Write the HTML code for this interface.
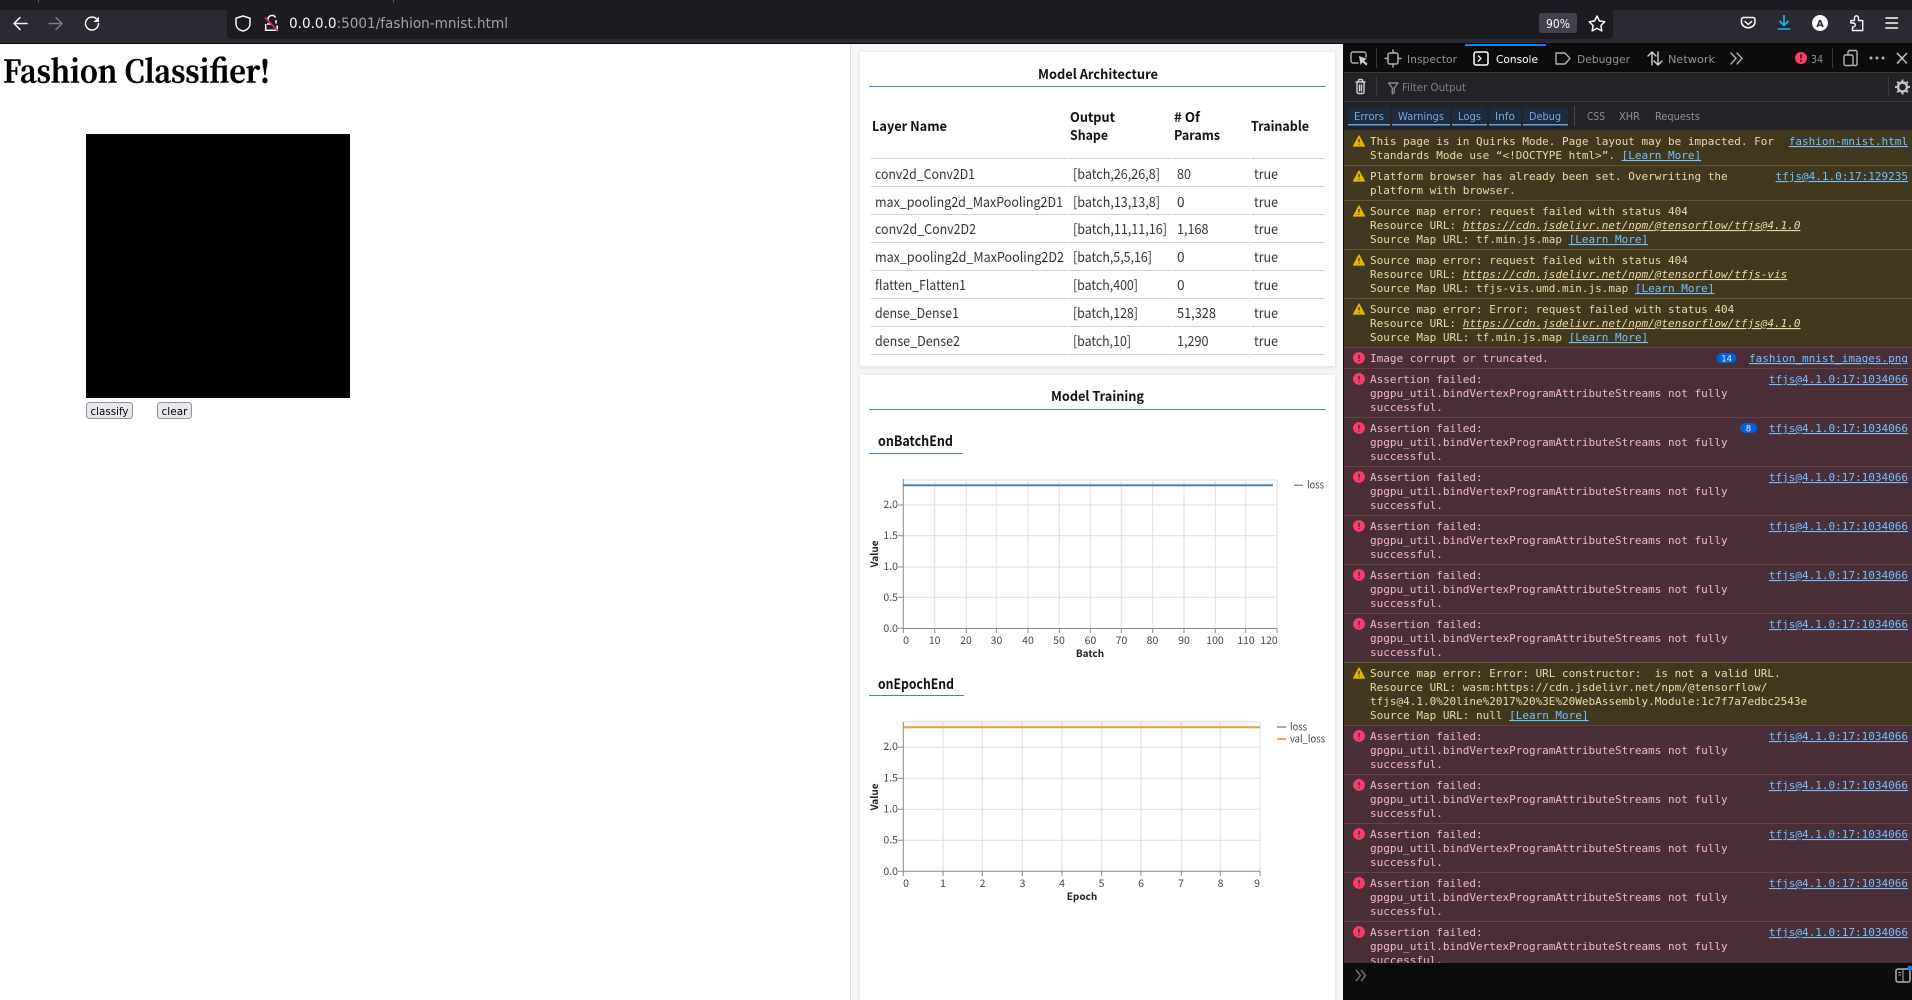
<!DOCTYPE html>
<html><head><meta charset="utf-8"><title>Fashion Classifier</title>
<style>
html,body{margin:0;padding:0;background:#fff;width:1912px;height:1000px;overflow:hidden}
svg{display:block}
text{white-space:pre}
.ns{font-family:"Noto Sans CJK JP","Liberation Sans",sans-serif}
.b{font-weight:700;fill:#111}
.td{font-size:13.6px;fill:#333}
.th{font-size:13.5px}
.tick{font-family:"Noto Sans CJK JP","Liberation Sans",sans-serif;font-size:10.5px;fill:#444}
.ax{font-family:"Noto Sans CJK JP","Liberation Sans",sans-serif;font-size:10px;font-weight:700;fill:#222}
.ui{font-family:"DejaVu Sans",sans-serif}
.dt{font-family:"DejaVu Sans",sans-serif;font-size:11px;fill:#939395}
.m{font-family:"DejaVu Sans Mono",monospace;font-size:11px}
.w{fill:#e9d9a6}
.e{fill:#f0b6c8}
.l{fill:#75bfff;text-decoration:underline}
.i{font-style:italic;text-decoration:underline}
.src{text-anchor:end}
.g{stroke:#e3e3e3;stroke-width:1.2;fill:none}
.a{stroke:#888;stroke-width:1;fill:none}
.ic{fill:none;stroke:#fbfbfe;stroke-width:1.5;stroke-linecap:round;stroke-linejoin:round}
.dc{fill:none;stroke:#b1b1b3;stroke-width:1.4;stroke-linecap:round;stroke-linejoin:round}
</style></head><body>
<svg width="1912" height="1000" viewBox="0 0 1912 1000" xmlns="http://www.w3.org/2000/svg">
<defs>
<filter id="sh" x="-3%" y="-3%" width="106%" height="106%"><feDropShadow dx="0" dy="1" stdDeviation="2" flood-color="#000" flood-opacity=".12"/></filter>
<symbol id="wi" viewBox="0 0 14 14" overflow="visible"><path d="M7 .8L13.6 13H.4Z" fill="#e5b800" stroke="#e5b800" stroke-linejoin="round"/><path d="M7 4.600V8.800M7 10.200V11.400" stroke="#3a3218" stroke-width="1.500"/></symbol>
<symbol id="ei" viewBox="0 0 14 14" overflow="visible"><circle cx="7" cy="7" r="6.900" fill="#ff3b6b"/><path d="M7 3.200V8M7 9.600V10.900" stroke="#4b2f36" stroke-width="1.800"/></symbol>
</defs>

<!-- browser chrome -->
<rect x="0" y="0" width="1912" height="10" fill="#1c1b22"/>
<rect x="38" y="0" width="1" height="3" fill="#55545c"/><rect x="393" y="0" width="1" height="3" fill="#55545c"/>
<rect x="0" y="10" width="1912" height="33" fill="#2b2a33"/>
<rect x="0" y="43" width="1912" height="1" fill="#0c0c0d"/>
<path class="ic" d="M27 23.500H14M20 17.500l-6 6 6 6"/>
<path class="ic" stroke-opacity=".4" d="M49 23.500H62M56 17.500l6 6-6 6"/>
<path class="ic" d="M98.500 23.500a6.500 6.500 0 1 1-2.500-5.100"/><path d="M99 16.500v5.500h-5.500z" fill="#fbfbfe"/>
<rect x="227" y="7" width="1386" height="32" rx="4" fill="#1c1b22"/>
<path class="ic" d="M243 16l7 2.200v5.300c0 3.800-2.800 6.500-7 7.500-4.200-1-7-3.700-7-7.500v-5.300z"/>
<path d="M268 21v-2a4 4 0 0 1 7.500-1.500M276 20v3.500M265.700 24v6.300h11.500V25.500" fill="none" stroke="#fbfbfe" stroke-width="1.500"/>
<path d="M267 24h5" stroke="#fbfbfe" stroke-width="1.500"/>
<path d="M265 17.500L278 31" stroke="#e22850" stroke-width="1.700"/>
<text class="ui" x="289" y="28" font-size="14" textLength="219" lengthAdjust="spacingAndGlyphs" fill="#a2a2a8"><tspan fill="#fbfbfe">0.0.0.0</tspan>:5001/fashion-mnist.html</text>
<rect x="1539" y="13" width="38" height="20" rx="3" fill="#42414d"/>
<text class="ui" x="1546" y="28" font-size="12" textLength="24" lengthAdjust="spacingAndGlyphs" fill="#fbfbfe">90%</text>
<path class="ic" d="M1597 16l2.400 4.900 5.400.8-3.900 3.800.9 5.400-4.800-2.600-4.800 2.600.9-5.400-3.900-3.800 5.400-.8z"/>
<path class="ic" d="M1743.500 17.500h9.500a2 2 0 0 1 2 2v3a6.800 6 0 0 1-13.500 0v-3a2 2 0 0 1 2-2zM1745 21.500l3.300 3 3.300-3"/>
<path fill="none" stroke="#1cb8f0" stroke-width="1.600" d="M1784 15v10.500M1779.500 21l4.500 4.500 4.500-4.500M1777.500 29h13"/>
<circle cx="1820" cy="23" r="8" fill="#fbfbfe"/>
<text class="ui" x="1820" y="27" font-size="9.500" font-weight="700" text-anchor="middle" fill="#2b2a33">A</text>
<path d="M1855 16.500a2 2 0 0 1 3.500 1.500v2.500h4.200v10H1852.500v-3.500h.8a2 2 0 0 0 0-4h-2.500v-2.500H1854.500V18a2 2 0 0 1 .5-1.500z" fill="none" stroke="#fbfbfe" stroke-width="1.400" stroke-linejoin="round"/>
<path class="ic" stroke-linecap="butt" d="M1886 18h11.500M1886 23h11.500M1886 28h11.500"/>

<!-- page left -->
<rect x="0" y="44" width="851" height="956" fill="#fff"/>
<text x="3" y="82.500" font-family="'Noto Serif CJK SC','Liberation Serif',serif" font-weight="700" font-size="31" textLength="267" lengthAdjust="spacingAndGlyphs" fill="#000" stroke="#000" stroke-width=".5">Fashion Classifier!</text>
<rect x="86" y="134" width="264" height="264" fill="#000"/>
<rect x="86.500" y="402.500" width="46" height="16" rx="3" fill="#e9e9ed" stroke="#8f8f9d"/>
<text class="ui" x="90.500" y="415" font-size="11" textLength="38" lengthAdjust="spacingAndGlyphs" fill="#000">classify</text>
<rect x="157.500" y="402.500" width="34" height="16" rx="3" fill="#e9e9ed" stroke="#8f8f9d"/>
<text class="ui" x="161.500" y="415" font-size="11" textLength="26" lengthAdjust="spacingAndGlyphs" fill="#000">clear</text>

<!-- panel -->
<rect x="850" y="44" width="494" height="956" fill="#f6f6f6"/>
<rect x="850" y="44" width="1" height="956" fill="#dcdcdc"/>
<rect x="860" y="52" width="475" height="314" fill="#fff" filter="url(#sh)"/>
<rect x="860" y="375" width="475" height="640" fill="#fff" filter="url(#sh)"/>

<text class="ns b th" x="1038" y="79" textLength="120" lengthAdjust="spacingAndGlyphs">Model Architecture</text>
<rect x="869" y="86" width="457" height="1" fill="#3f80d8"/>
<g class="ns b th">
<text class="ns b th" x="872" y="131" textLength="75" lengthAdjust="spacingAndGlyphs">Layer Name</text>
<text class="ns b th" x="1070" y="122" textLength="45" lengthAdjust="spacingAndGlyphs">Output</text>
<text class="ns b th" x="1070" y="140" textLength="38" lengthAdjust="spacingAndGlyphs">Shape</text>
<text class="ns b th" x="1174" y="122" textLength="26" lengthAdjust="spacingAndGlyphs"># Of</text>
<text class="ns b th" x="1174" y="140" textLength="46" lengthAdjust="spacingAndGlyphs">Params</text>
<text class="ns b th" x="1251" y="131" textLength="58" lengthAdjust="spacingAndGlyphs">Trainable</text>
</g>
<g fill="#d0d0d0">
<rect x="871" y="158" width="197" height="1"/><rect x="1069" y="158" width="102" height="1"/><rect x="1173" y="158" width="76" height="1"/><rect x="1251" y="158" width="73" height="1"/>
<rect x="871" y="186" width="197" height="1"/><rect x="1069" y="186" width="102" height="1"/><rect x="1173" y="186" width="76" height="1"/><rect x="1251" y="186" width="73" height="1"/>
<rect x="871" y="214" width="197" height="1"/><rect x="1069" y="214" width="102" height="1"/><rect x="1173" y="214" width="76" height="1"/><rect x="1251" y="214" width="73" height="1"/>
<rect x="871" y="242" width="197" height="1"/><rect x="1069" y="242" width="102" height="1"/><rect x="1173" y="242" width="76" height="1"/><rect x="1251" y="242" width="73" height="1"/>
<rect x="871" y="270" width="197" height="1"/><rect x="1069" y="270" width="102" height="1"/><rect x="1173" y="270" width="76" height="1"/><rect x="1251" y="270" width="73" height="1"/>
<rect x="871" y="298" width="197" height="1"/><rect x="1069" y="298" width="102" height="1"/><rect x="1173" y="298" width="76" height="1"/><rect x="1251" y="298" width="73" height="1"/>
<rect x="871" y="326" width="197" height="1"/><rect x="1069" y="326" width="102" height="1"/><rect x="1173" y="326" width="76" height="1"/><rect x="1251" y="326" width="73" height="1"/>
<rect x="871" y="354" width="197" height="1"/><rect x="1069" y="354" width="102" height="1"/><rect x="1173" y="354" width="76" height="1"/><rect x="1251" y="354" width="73" height="1"/>
</g>
<text class="ns td" x="875" y="179" textLength="100" lengthAdjust="spacingAndGlyphs">conv2d_Conv2D1</text>
<text class="ns td" x="1073" y="179" textLength="87" lengthAdjust="spacingAndGlyphs">[batch,26,26,8]</text>
<text class="ns td" x="1177" y="179" textLength="14" lengthAdjust="spacingAndGlyphs">80</text>
<text class="ns td" x="1254" y="179" textLength="24" lengthAdjust="spacingAndGlyphs">true</text>
<text class="ns td" x="875" y="207" textLength="188" lengthAdjust="spacingAndGlyphs">max_pooling2d_MaxPooling2D1</text>
<text class="ns td" x="1073" y="207" textLength="87" lengthAdjust="spacingAndGlyphs">[batch,13,13,8]</text>
<text class="ns td" x="1177" y="207">0</text>
<text class="ns td" x="1254" y="207" textLength="24" lengthAdjust="spacingAndGlyphs">true</text>
<text class="ns td" x="875" y="234" textLength="101" lengthAdjust="spacingAndGlyphs">conv2d_Conv2D2</text>
<text class="ns td" x="1073" y="234" textLength="94" lengthAdjust="spacingAndGlyphs">[batch,11,11,16]</text>
<text class="ns td" x="1177" y="234" textLength="31.500" lengthAdjust="spacingAndGlyphs">1,168</text>
<text class="ns td" x="1254" y="234" textLength="24" lengthAdjust="spacingAndGlyphs">true</text>
<text class="ns td" x="875" y="262" textLength="189" lengthAdjust="spacingAndGlyphs">max_pooling2d_MaxPooling2D2</text>
<text class="ns td" x="1073" y="262" textLength="79" lengthAdjust="spacingAndGlyphs">[batch,5,5,16]</text>
<text class="ns td" x="1177" y="262">0</text>
<text class="ns td" x="1254" y="262" textLength="24" lengthAdjust="spacingAndGlyphs">true</text>
<text class="ns td" x="875" y="290" textLength="91" lengthAdjust="spacingAndGlyphs">flatten_Flatten1</text>
<text class="ns td" x="1073" y="290" textLength="65" lengthAdjust="spacingAndGlyphs">[batch,400]</text>
<text class="ns td" x="1177" y="290">0</text>
<text class="ns td" x="1254" y="290" textLength="24" lengthAdjust="spacingAndGlyphs">true</text>
<text class="ns td" x="875" y="318" textLength="84" lengthAdjust="spacingAndGlyphs">dense_Dense1</text>
<text class="ns td" x="1073" y="318" textLength="65" lengthAdjust="spacingAndGlyphs">[batch,128]</text>
<text class="ns td" x="1177" y="318" textLength="39" lengthAdjust="spacingAndGlyphs">51,328</text>
<text class="ns td" x="1254" y="318" textLength="24" lengthAdjust="spacingAndGlyphs">true</text>
<text class="ns td" x="875" y="346" textLength="85" lengthAdjust="spacingAndGlyphs">dense_Dense2</text>
<text class="ns td" x="1073" y="346" textLength="58" lengthAdjust="spacingAndGlyphs">[batch,10]</text>
<text class="ns td" x="1177" y="346" textLength="31.500" lengthAdjust="spacingAndGlyphs">1,290</text>
<text class="ns td" x="1254" y="346" textLength="24" lengthAdjust="spacingAndGlyphs">true</text>

<text class="ns b th" x="1051" y="401" textLength="93" lengthAdjust="spacingAndGlyphs">Model Training</text>
<rect x="869" y="409" width="457" height="1" fill="#3f80d8"/>
<text class="ns b" x="878" y="446" font-size="14" textLength="75" lengthAdjust="spacingAndGlyphs">onBatchEnd</text>
<rect x="869" y="453" width="94" height="1" fill="#3f80d8"/>

<!-- chart 1 -->
<path class="g" d="M934.700 480V628M966.300 480V628M996.300 480V628M1028 480V628M1059.300 480V628M1090.300 480V628M1121.300 480V628M1152.700 480V628M1184 480V628M1215.300 480V628M1245.700 480V628M1277 480V628M903 480H1277M903 505H1277M903 535.700H1277M903 567H1277M903 597.300H1277"/>
<path class="a" d="M903.300 479V628.500H1277M903.300 628V633M934.700 628V633M966.300 628V633M996.300 628V633M1028 628V633M1059.300 628V633M1090.300 628V633M1121.300 628V633M1152.700 628V633M1184 628V633M1215.300 628V633M1245.700 628V633M1277 628V633M898 505H903M898 535.700H903M898 567H903M898 597.300H903M898 628.300H903"/>
<path d="M903 485.200H1273" stroke="#4c78a8" stroke-width="1.500" fill="none"/>
<path d="M903 485.200H1273" stroke="#4c78a8" stroke-opacity=".25" stroke-width="3.500" fill="none"/>
<g class="tick" text-anchor="end">
<text x="898" y="508">2.0</text><text x="898" y="539">1.5</text><text x="898" y="570">1.0</text><text x="898" y="601">0.5</text><text x="898" y="632">0.0</text>
</g>
<g class="tick" text-anchor="middle">
<text x="906" y="644">0</text><text x="934.700" y="644">10</text><text x="966" y="644">20</text><text x="996.500" y="644">30</text><text x="1028" y="644">40</text><text x="1059" y="644">50</text><text x="1090.500" y="644">60</text><text x="1121.500" y="644">70</text><text x="1152.500" y="644">80</text><text x="1184" y="644">90</text><text x="1215" y="644">100</text><text x="1246" y="644">110</text><text x="1269" y="644">120</text>
</g>
<text class="ax" x="1090" y="657" text-anchor="middle">Batch</text>
<text class="ax" transform="translate(878 554) rotate(-90)" text-anchor="middle">Value</text>
<path d="M1294 485.300H1303" stroke="#4c78a8" stroke-width="1.500" stroke-opacity=".8"/>
<text class="tick" x="1307" y="488.500" textLength="17" lengthAdjust="spacingAndGlyphs">loss</text>

<text class="ns b" x="878" y="689" font-size="14" textLength="76" lengthAdjust="spacingAndGlyphs">onEpochEnd</text>
<rect x="869" y="695" width="95" height="1" fill="#3f80d8"/>

<!-- chart 2 -->
<path class="g" d="M943 722V871M982.300 722V871M1022.300 722V871M1062 722V871M1101.700 722V871M1141 722V871M1181.300 722V871M1220.300 722V871M1260 722V871M903 722H1260M903 747.300H1260M903 778.300H1260M903 809.300H1260M903 840.300H1260"/>
<path class="a" d="M903.300 722V871.300H1260M903.300 871V876M943 871V876M982.300 871V876M1022.300 871V876M1062 871V876M1101.700 871V876M1141 871V876M1181.300 871V876M1220.300 871V876M1260 871V876M898 747.300H903M898 778.300H903M898 809.300H903M898 840.300H903M898 871.300H903"/>
<path d="M903 727.300H1260" stroke="#f58518" stroke-width="2" stroke-opacity=".85" fill="none"/>
<g class="tick" text-anchor="end">
<text x="898" y="750">2.0</text><text x="898" y="781.500">1.5</text><text x="898" y="812.500">1.0</text><text x="898" y="843.500">0.5</text><text x="898" y="875">0.0</text>
</g>
<g class="tick" text-anchor="middle">
<text x="906" y="887">0</text><text x="943" y="887">1</text><text x="982.500" y="887">2</text><text x="1022.500" y="887">3</text><text x="1062" y="887">4</text><text x="1101.500" y="887">5</text><text x="1141" y="887">6</text><text x="1181" y="887">7</text><text x="1220.500" y="887">8</text><text x="1257" y="887">9</text>
</g>
<text class="ax" x="1082" y="900" text-anchor="middle">Epoch</text>
<text class="ax" transform="translate(878 797) rotate(-90)" text-anchor="middle">Value</text>
<path d="M1277 727H1286" stroke="#4c78a8" stroke-width="1.500" stroke-opacity=".8"/>
<path d="M1277 739H1286" stroke="#f58518" stroke-width="1.800" stroke-opacity=".85"/>
<text class="tick" x="1290" y="730.500" textLength="17" lengthAdjust="spacingAndGlyphs">loss</text>
<text class="tick" x="1290" y="742.500" textLength="35" lengthAdjust="spacingAndGlyphs">val_loss</text>

<!-- devtools toolbar -->
<rect x="1344" y="44" width="568" height="29" fill="#0c0c0d"/>
<rect x="1344" y="73" width="568" height="57" fill="#232327"/>
<rect x="1343" y="44" width="1" height="956" fill="#0c0c0d"/>
<rect x="1344" y="72" width="568" height="1" fill="#38383d"/>
<rect x="1344" y="101" width="568" height="1" fill="#38383d"/>
<rect x="1465" y="44" width="81" height="2" fill="#0a84ff"/>

<path class="dc" stroke="#d0d0d2" d="M1358 63h-5a2 2 0 0 1-2-2v-7a2 2 0 0 1 2-2h11a2 2 0 0 1 2 2v3"/>
<path d="M1359 56l1.500 9 2-3 3.500 3.500 1.500-1.500-3.500-3.500 3-1.500z" fill="#d0d0d2"/>
<rect x="1376" y="48" width="1" height="20" fill="#38383d"/>
<rect x="1388" y="53" width="10" height="11" rx="2" fill="none" stroke="#b1b1b3" stroke-width="1.500"/>
<path class="dc" d="M1393 50v3M1393 64v3M1385 58.500h3M1398 58.500h3"/>
<text class="dt" x="1407" y="63" textLength="50" lengthAdjust="spacingAndGlyphs">Inspector</text>
<rect x="1474" y="52" width="14" height="13" rx="2" fill="none" stroke="#fff" stroke-width="1.500"/>
<path d="M1478 55.500l3 3-3 3" fill="none" stroke="#fff" stroke-width="1.300"/>
<text class="dt" style="fill:#fff" x="1496" y="63" textLength="42" lengthAdjust="spacingAndGlyphs">Console</text>
<path class="dc" d="M1556 53h9l5 5.500-5 5.500h-9z"/>
<text class="dt" x="1577" y="63" textLength="53" lengthAdjust="spacingAndGlyphs">Debugger</text>
<path class="dc" stroke="#d0d0d2" style="stroke:#d0d0d2" d="M1652 65V52M1648 56l4-4 4 4M1658 52V65M1654 61l4 4 4-4"/>
<text class="dt" x="1668" y="63" textLength="47" lengthAdjust="spacingAndGlyphs">Network</text>
<path class="dc" stroke-width="1.800" d="M1731 53l5 5.500-5 5.500M1737 53l5 5.500-5 5.500"/>
<circle cx="1801" cy="58" r="6" fill="#ff3b6b"/><path d="M1801 54.500v4M1801 60v1.500" stroke="#0c0c0d" stroke-width="1.500"/>
<text class="dt" x="1811" y="63" textLength="12" lengthAdjust="spacingAndGlyphs">34</text>
<rect x="1832" y="48" width="1" height="20" fill="#38383d"/>
<path class="dc" d="M1848 55v-3a1.500 1.500 0 0 1 1.500-1.500h6a1.500 1.500 0 0 1 1.500 1.500v12a1.500 1.500 0 0 1-1.500 1.500h-2"/>
<rect x="1844" y="55" width="9" height="10.500" rx="1.500" fill="none" stroke="#b1b1b3" stroke-width="1.400"/>
<circle cx="1871" cy="58" r="1.500" fill="#b1b1b3"/><circle cx="1877" cy="58" r="1.500" fill="#b1b1b3"/><circle cx="1883" cy="58" r="1.500" fill="#b1b1b3"/>
<path d="M1897 53l10 10.500M1907 53l-10 10.500" stroke="#c5c5c7" stroke-width="1.500" fill="none"/>

<path class="dc" style="stroke:#d0d0d2" d="M1356 82h9M1358.500 82v-1.500a1 1 0 0 1 1-1h2a1 1 0 0 1 1 1v1.500M1357 82v10a1.500 1.500 0 0 0 1.500 1.500h4a1.500 1.500 0 0 0 1.500-1.500V82M1359.500 85v6M1361.500 85v6"/>
<rect x="1376" y="77" width="1" height="20" fill="#38383d"/>
<path class="dc" style="stroke:#8a8a8e" d="M1388.500 83h9.500l-3.700 5v4.500l-2 1.500v-6z"/>
<text class="dt" style="fill:#808084" x="1402" y="91" textLength="64" lengthAdjust="spacingAndGlyphs">Filter Output</text>
<rect x="1888" y="77" width="1" height="20" fill="#38383d"/>
<circle cx="1902.500" cy="87" r="4.500" fill="none" stroke="#c5c5c7" stroke-width="2.400"/>
<path d="M1902.500 79.500v2.500M1902.500 92v2.500M1895 87h2.500M1907.500 87h2.500M1897.200 81.700l1.800 1.800M1906 90.500l1.800 1.800M1907.800 81.700l-1.800 1.800M1899 90.500l-1.800 1.800" stroke="#c5c5c7" stroke-width="2"/>

<g fill="#1d2b3d">
<rect x="1348" y="107" width="42" height="18" rx="2"/><rect x="1392" y="107" width="58" height="18" rx="2"/><rect x="1452" y="107" width="35" height="18" rx="2"/><rect x="1489" y="107" width="32" height="18" rx="2"/><rect x="1523" y="107" width="45" height="18" rx="2"/>
</g>
<g fill="#58a6e8">
<rect x="1348" y="124" width="42" height="1.500"/><rect x="1392" y="124" width="58" height="1.500"/><rect x="1452" y="124" width="35" height="1.500"/><rect x="1489" y="124" width="32" height="1.500"/><rect x="1523" y="124" width="45" height="1.500"/>
</g>
<g class="dt" style="fill:#75a9dc">
<text class="dt" style="fill:#75a9dc" x="1354" y="120" textLength="30" lengthAdjust="spacingAndGlyphs">Errors</text>
<text class="dt" style="fill:#75a9dc" x="1398" y="120" textLength="46" lengthAdjust="spacingAndGlyphs">Warnings</text>
<text class="dt" style="fill:#75a9dc" x="1458" y="120" textLength="23" lengthAdjust="spacingAndGlyphs">Logs</text>
<text class="dt" style="fill:#75a9dc" x="1495" y="120" textLength="20" lengthAdjust="spacingAndGlyphs">Info</text>
<text class="dt" style="fill:#75a9dc" x="1529" y="120" textLength="32" lengthAdjust="spacingAndGlyphs">Debug</text>
</g>
<rect x="1574" y="106" width="1" height="20" fill="#4a4a4f"/>
<text class="dt" x="1587" y="120" textLength="18" lengthAdjust="spacingAndGlyphs">CSS</text>
<text class="dt" x="1619" y="120" textLength="21" lengthAdjust="spacingAndGlyphs">XHR</text>
<text class="dt" x="1655" y="120" textLength="45" lengthAdjust="spacingAndGlyphs">Requests</text>

<!-- console rows backgrounds -->
<rect x="1344" y="130" width="568" height="217" fill="#42381f"/>
<rect x="1344" y="347" width="568" height="316" fill="#4b2f38"/>
<rect x="1344" y="663" width="568" height="62" fill="#42381f"/>
<rect x="1344" y="725" width="568" height="238" fill="#4b2f38"/>
<g fill="#5f5a2e">
<rect x="1344" y="165" width="568" height="1"/><rect x="1344" y="200" width="568" height="1"/><rect x="1344" y="249" width="568" height="1"/><rect x="1344" y="298" width="568" height="1"/><rect x="1344" y="662" width="568" height="1"/>
</g>
<g fill="#6b3f4a">
<rect x="1344" y="347" width="568" height="1"/><rect x="1344" y="368" width="568" height="1"/><rect x="1344" y="417" width="568" height="1"/><rect x="1344" y="466" width="568" height="1"/><rect x="1344" y="515" width="568" height="1"/><rect x="1344" y="564" width="568" height="1"/><rect x="1344" y="613" width="568" height="1"/><rect x="1344" y="725" width="568" height="1"/><rect x="1344" y="774" width="568" height="1"/><rect x="1344" y="823" width="568" height="1"/><rect x="1344" y="872" width="568" height="1"/><rect x="1344" y="921" width="568" height="1"/>
</g>

<!-- warnings -->
<use href="#wi" x="1353" y="135" width="12" height="12"/>
<text class="m w" x="1370" y="145">This page is in Quirks Mode. Page layout may be impacted. For</text>
<text class="m l src" x="1908" y="145">fashion-mnist.html</text>
<text class="m w" x="1370" y="159">Standards Mode use “&lt;!DOCTYPE html&gt;”. <tspan class="l">[Learn More]</tspan></text>

<use href="#wi" x="1353" y="170" width="12" height="12"/>
<text class="m w" x="1370" y="180">Platform browser has already been set. Overwriting the</text>
<text class="m l src" x="1908" y="180">tfjs@4.1.0:17:129235</text>
<text class="m w" x="1370" y="194">platform with browser.</text>

<use href="#wi" x="1353" y="205" width="12" height="12"/>
<text class="m w" x="1370" y="215">Source map error: request failed with status 404</text>
<text class="m w" x="1370" y="229">Resource URL: <tspan class="i">https://cdn.jsdelivr.net/npm/@tensorflow/tfjs@4.1.0</tspan></text>
<text class="m w" x="1370" y="243">Source Map URL: tf.min.js.map <tspan class="l">[Learn More]</tspan></text>

<use href="#wi" x="1353" y="254" width="12" height="12"/>
<text class="m w" x="1370" y="264">Source map error: request failed with status 404</text>
<text class="m w" x="1370" y="278">Resource URL: <tspan class="i">https://cdn.jsdelivr.net/npm/@tensorflow/tfjs-vis</tspan></text>
<text class="m w" x="1370" y="292">Source Map URL: tfjs-vis.umd.min.js.map <tspan class="l">[Learn More]</tspan></text>

<use href="#wi" x="1353" y="303" width="12" height="12"/>
<text class="m w" x="1370" y="313">Source map error: Error: request failed with status 404</text>
<text class="m w" x="1370" y="327">Resource URL: <tspan class="i">https://cdn.jsdelivr.net/npm/@tensorflow/tfjs@4.1.0</tspan></text>
<text class="m w" x="1370" y="341">Source Map URL: tf.min.js.map <tspan class="l">[Learn More]</tspan></text>

<use href="#ei" x="1353" y="352" width="12" height="12"/>
<text class="m e" x="1370" y="362">Image corrupt or truncated.</text>
<rect x="1716.500" y="353" width="20" height="10" rx="5" fill="#0060df"/>
<text class="m" x="1726.500" y="361.500" font-size="9" text-anchor="middle" style="font-size:9px;fill:#e8f0ff">14</text>
<text class="m l src" x="1908" y="362">fashion_mnist_images.png</text>

<use href="#ei" x="1353" y="373" width="12" height="12"/>
<text class="m e" x="1370" y="383">Assertion failed:</text><text class="m l src" x="1908" y="383">tfjs@4.1.0:17:1034066</text>
<text class="m e" x="1370" y="397">gpgpu_util.bindVertexProgramAttributeStreams not fully</text>
<text class="m e" x="1370" y="411">successful.</text>

<use href="#ei" x="1353" y="422" width="12" height="12"/>
<text class="m e" x="1370" y="432">Assertion failed:</text><text class="m l src" x="1908" y="432">tfjs@4.1.0:17:1034066</text>
<rect x="1740" y="423" width="17" height="10" rx="5" fill="#0060df"/>
<text class="m" x="1748.500" y="431.500" text-anchor="middle" style="font-size:9px;fill:#e8f0ff">8</text>
<text class="m e" x="1370" y="446">gpgpu_util.bindVertexProgramAttributeStreams not fully</text>
<text class="m e" x="1370" y="460">successful.</text>

<use href="#ei" x="1353" y="471" width="12" height="12"/>
<text class="m e" x="1370" y="481">Assertion failed:</text><text class="m l src" x="1908" y="481">tfjs@4.1.0:17:1034066</text>
<text class="m e" x="1370" y="495">gpgpu_util.bindVertexProgramAttributeStreams not fully</text>
<text class="m e" x="1370" y="509">successful.</text>

<use href="#ei" x="1353" y="520" width="12" height="12"/>
<text class="m e" x="1370" y="530">Assertion failed:</text><text class="m l src" x="1908" y="530">tfjs@4.1.0:17:1034066</text>
<text class="m e" x="1370" y="544">gpgpu_util.bindVertexProgramAttributeStreams not fully</text>
<text class="m e" x="1370" y="558">successful.</text>

<use href="#ei" x="1353" y="569" width="12" height="12"/>
<text class="m e" x="1370" y="579">Assertion failed:</text><text class="m l src" x="1908" y="579">tfjs@4.1.0:17:1034066</text>
<text class="m e" x="1370" y="593">gpgpu_util.bindVertexProgramAttributeStreams not fully</text>
<text class="m e" x="1370" y="607">successful.</text>

<use href="#ei" x="1353" y="618" width="12" height="12"/>
<text class="m e" x="1370" y="628">Assertion failed:</text><text class="m l src" x="1908" y="628">tfjs@4.1.0:17:1034066</text>
<text class="m e" x="1370" y="642">gpgpu_util.bindVertexProgramAttributeStreams not fully</text>
<text class="m e" x="1370" y="656">successful.</text>

<use href="#wi" x="1353" y="667" width="12" height="12"/>
<text class="m w" x="1370" y="677">Source map error: Error: URL constructor:  is not a valid URL.</text>
<text class="m w" x="1370" y="691">Resource URL: wasm:https://cdn.jsdelivr.net/npm/@tensorflow/</text>
<text class="m w" x="1370" y="705">tfjs@4.1.0%20line%2017%20%3E%20WebAssembly.Module:1c7f7a7edbc2543e</text>
<text class="m w" x="1370" y="719">Source Map URL: null <tspan class="l">[Learn More]</tspan></text>

<use href="#ei" x="1353" y="730" width="12" height="12"/>
<text class="m e" x="1370" y="740">Assertion failed:</text><text class="m l src" x="1908" y="740">tfjs@4.1.0:17:1034066</text>
<text class="m e" x="1370" y="754">gpgpu_util.bindVertexProgramAttributeStreams not fully</text>
<text class="m e" x="1370" y="768">successful.</text>

<use href="#ei" x="1353" y="779" width="12" height="12"/>
<text class="m e" x="1370" y="789">Assertion failed:</text><text class="m l src" x="1908" y="789">tfjs@4.1.0:17:1034066</text>
<text class="m e" x="1370" y="803">gpgpu_util.bindVertexProgramAttributeStreams not fully</text>
<text class="m e" x="1370" y="817">successful.</text>

<use href="#ei" x="1353" y="828" width="12" height="12"/>
<text class="m e" x="1370" y="838">Assertion failed:</text><text class="m l src" x="1908" y="838">tfjs@4.1.0:17:1034066</text>
<text class="m e" x="1370" y="852">gpgpu_util.bindVertexProgramAttributeStreams not fully</text>
<text class="m e" x="1370" y="866">successful.</text>

<use href="#ei" x="1353" y="877" width="12" height="12"/>
<text class="m e" x="1370" y="887">Assertion failed:</text><text class="m l src" x="1908" y="887">tfjs@4.1.0:17:1034066</text>
<text class="m e" x="1370" y="901">gpgpu_util.bindVertexProgramAttributeStreams not fully</text>
<text class="m e" x="1370" y="915">successful.</text>

<use href="#ei" x="1353" y="926" width="12" height="12"/>
<text class="m e" x="1370" y="936">Assertion failed:</text><text class="m l src" x="1908" y="936">tfjs@4.1.0:17:1034066</text>
<text class="m e" x="1370" y="950">gpgpu_util.bindVertexProgramAttributeStreams not fully</text>
<text class="m e" x="1370" y="964">successful.</text>

<!-- bottom input -->
<rect x="1344" y="963" width="568" height="37" fill="#0c0c0d"/>
<path d="M1357 970l4.500 5.500-4.500 5.500M1362 970l4.500 5.500-4.500 5.500" transform="translate(-1 0)" fill="none" stroke="#77777b" stroke-width="1.400"/>
<rect x="1896" y="969" width="14" height="13" rx="2" fill="none" stroke="#b1b1b3" stroke-width="1.500"/>
<path d="M1903 969.500v12M1898.500 972.500h2.500M1898.500 975h2.500" fill="none" stroke="#b1b1b3"/>
<circle cx="1910" cy="968" r="2.500" fill="#0a84ff"/>
</svg>
</body></html>
